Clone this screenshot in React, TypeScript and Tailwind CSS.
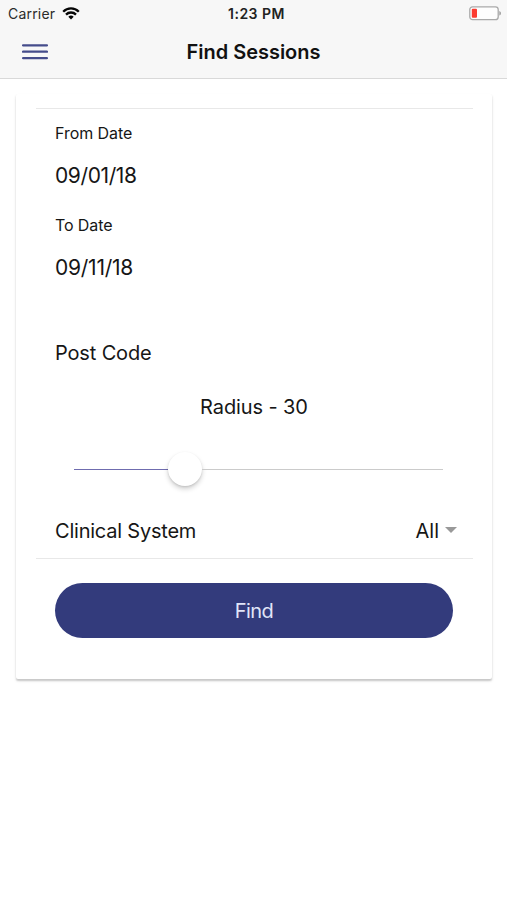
function StatusBar() {
  return (
    <div className="grid h-[26px] grid-cols-[1fr_auto_1fr] items-center pl-2 pr-[6px] pt-px">
      <div className="flex items-center gap-[6px]">
        <span className="text-[14px] leading-none tracking-[0.2px] text-[#2b2b2b]">Carrier</span>
        <svg className="ml-[0.5px]" width="18" height="13" viewBox="0 0 18 13" fill="none" stroke="#050505" strokeWidth="2.3">
          <path d="M1.2 4.7a11 11 0 0 1 15.6 0" />
          <path d="M4 7.6a7 7 0 0 1 10 0" />
          <path d="M9 12.5 6.3 9.8a3.8 3.8 0 0 1 5.4 0Z" fill="#050505" stroke="none" />
        </svg>
      </div>
      <span className="-mr-1 text-[14px] font-semibold leading-none tracking-[0.5px] text-[#222]">1:23 PM</span>
      <svg className="-mr-px justify-self-end" width="33" height="15" viewBox="0 0 33 15">
        <rect x="0.8" y="0.8" width="28.4" height="12.9" rx="2.8" fill="#fdfdfd" stroke="#a9a9a9" strokeWidth="1.3" />
        <rect x="2.8" y="2.8" width="5.2" height="9" rx="1" fill="#fb3b30" />
        <path d="M30.3 5v4.6c2.3-.8 2.3-3.8 0-4.6Z" fill="#a0a0a0" />
      </svg>
    </div>
  );
}

function Header() {
  return (
    <header className="h-[79px] border-b border-[#d9d9d9] bg-[#f7f7f7]">
      <StatusBar />
      <div className="grid h-[52px] grid-cols-[1fr_auto_1fr] items-center">
        <button aria-label="Menu" className="ml-[22px] w-[26px]">
          <svg className="block" width="26" height="16" viewBox="0 0 26 16" stroke="#454c8b" strokeWidth="2.3" strokeLinecap="round">
            <path d="M1.1 1.3h23.8M1.1 7.7h23.8M1.1 14.1h23.8" />
          </svg>
        </button>
        <h1 className="text-[20px] font-semibold leading-none tracking-[-0.03px] text-[#111]">Find Sessions</h1>
      </div>
    </header>
  );
}

export default function App() {
  return (
    <div className="h-[900px] w-[507px] overflow-hidden bg-white font-['Inter',sans-serif] text-[#161616]">
      <Header />
      <main className="mx-4 mt-[15px] h-[585px] w-[476px] rounded-[2px] bg-white px-5 pt-[14px] shadow-[0_1.5px_1.5px_rgba(0,0,0,0.12),0_2px_3px_rgba(0,0,0,0.12)]">
        <div className="-mr-px flex h-[451px] flex-col border-y border-[#e8e8e8] pl-[19px] pr-4">
          <div className="mt-[14px] h-5 text-[16px] leading-5 tracking-[-0.05px]">From Date</div>
          <div className="mt-[19px] h-7 text-[21px] leading-7 tracking-[-0.4px]">09/01/18</div>
          <div className="mt-[25px] h-5 text-[16px] leading-5 tracking-[-0.1px]">To Date</div>
          <div className="mt-[19px] h-7 text-[21px] leading-7 tracking-[-0.25px]">09/11/18</div>
          <div className="mt-[57px] h-7 text-[20px] leading-7 tracking-[-0.15px]">Post Code</div>
          <div className="mt-[26px] h-7 pr-[4px] text-center text-[20px] leading-7 tracking-[-0.1px]">Radius - 30</div>
          <div className="ml-[19px] mr-[14px] mt-[30px] flex h-9 items-center">
            <div className="mt-px h-[1.5px] w-[94px] bg-[#6f6caf]" />
            <div className="size-[34px] rounded-full bg-white shadow-[0_3px_5px_rgba(0,0,0,0.18),0_1px_2px_rgba(0,0,0,0.1)]" />
            <div className="mt-px h-[1.5px] flex-1 bg-[#cbcbcb]" />
          </div>
          <div className="mt-[30px] flex h-7 items-center text-[20px] leading-7">
            <span className="tracking-[-0.22px]">Clinical System</span>
            <span className="ml-auto">All</span>
            <svg className="mb-[3px] ml-[6px]" width="12" height="6" viewBox="0 0 12 6" fill="#999">
              <path d="M0 0h12L6 6Z" />
            </svg>
          </div>
        </div>
        <button className="ml-[19px] mt-6 block h-[55px] w-[398px] rounded-full bg-[#333b7c] text-[20px] leading-none tracking-[-0.5px] text-[#e1e5f8]">
          Find
        </button>
      </main>
    </div>
  );
}
